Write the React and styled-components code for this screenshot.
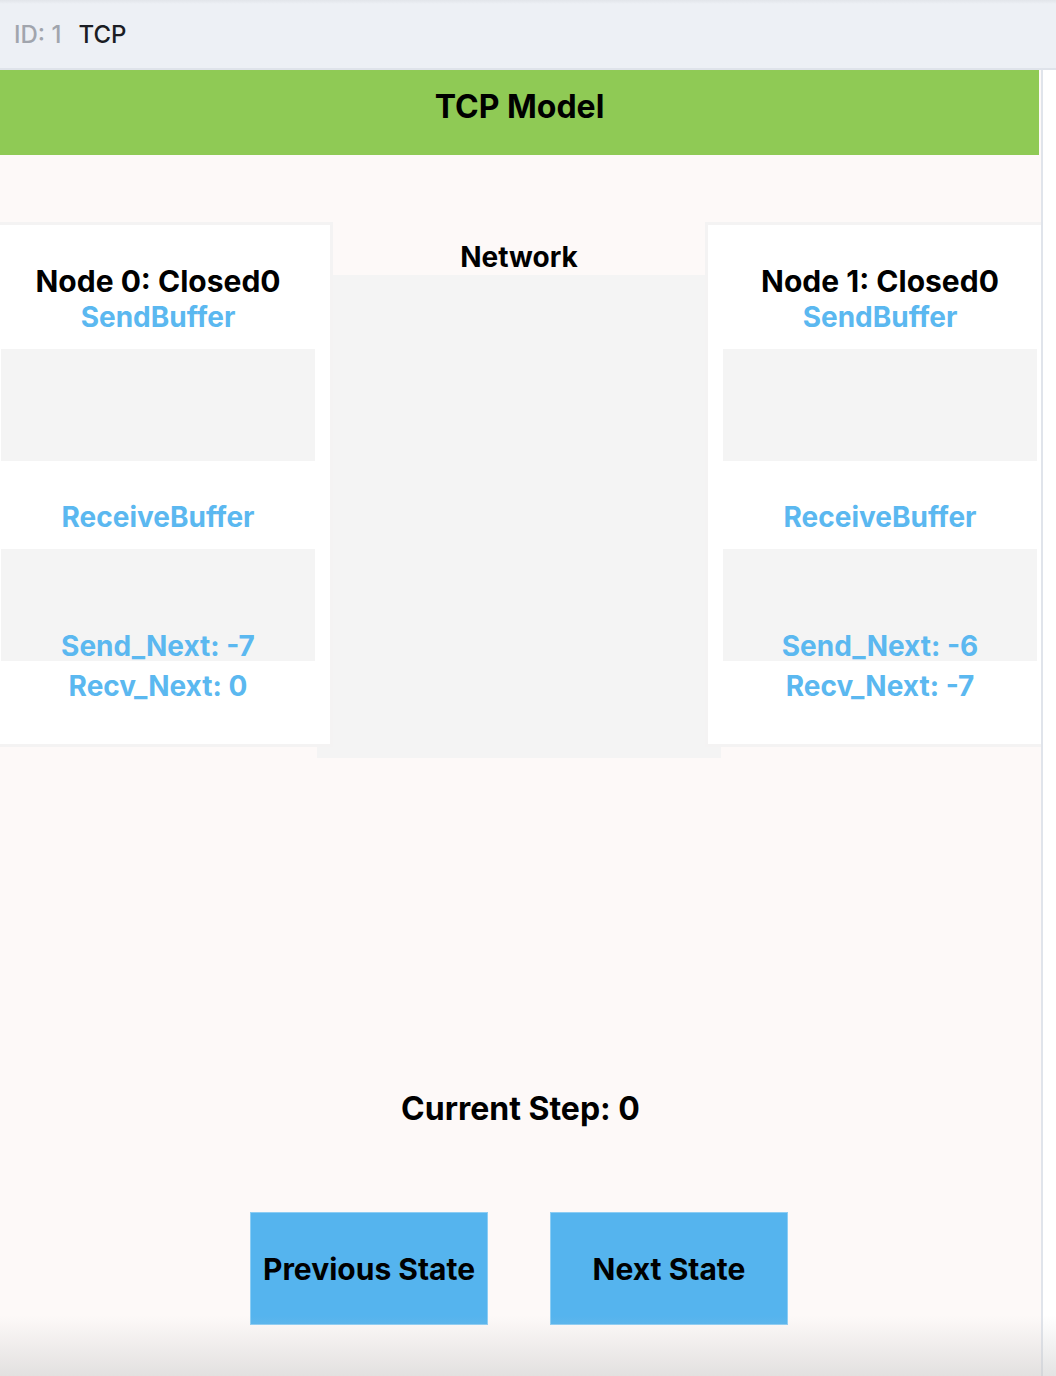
import React from 'react';
import styled, { createGlobalStyle } from 'styled-components';

const GlobalStyle = createGlobalStyle`
  html, body {
    margin: 0;
    padding: 0;
    background: #ffffff;
    font-family: Inter, "Noto Sans", sans-serif;
  }
`;

const Page = styled.div`
  width: 1056px;
  height: 1376px;
  display: flex;
  flex-direction: column;
  overflow: hidden;
  position: relative;
`;

const TopBar = styled.div`
  height: 68px;
  flex-shrink: 0;
  display: flex;
  align-items: center;
  gap: 17px;
  padding-left: 14px;
  background: linear-gradient(#e2e5ea 0, #edf0f5 4px);
  border-bottom: 2px solid #dfe3ea;
  font-size: 24px;
  font-weight: 500;
`;

const IdLabel = styled.span`
  color: #a1a5ad;
`;

const TopTitle = styled.span`
  color: #1b1d24;
`;

const Body = styled.div`
  flex: 1;
  display: flex;
`;

const Panel = styled.div`
  width: 1041px;
  flex-shrink: 0;
  background: #fdf9f8;
  overflow: hidden;
  display: flex;
  flex-direction: column;
  align-items: center;
`;

const Side = styled.div`
  flex: 1;
  background: #ffffff;
  border-left: 2px solid #e0e4eb;
`;

const Banner = styled.div`
  align-self: stretch;
  margin-right: 2px;
  height: 85px;
  box-sizing: border-box;
  padding-top: 17px;
  background: #8fca55;
  text-align: center;
  font-size: 32px;
  font-weight: 700;
  line-height: 40px;
  color: #000;
`;

const Row = styled.div`
  align-self: flex-start;
  margin-top: 67px;
  margin-left: -17px;
  display: flex;
  align-items: flex-start;
`;

const NodeCard = styled.div`
  position: relative;
  z-index: 1;
  width: 344px;
  flex-shrink: 0;
  margin-left: ${({ overlap }) => (overlap ? '-16px' : '0')};
  padding: 38px 0;
  background: #ffffff;
  border: 3px solid #f4f3f3;
  display: flex;
  flex-direction: column;
  align-items: stretch;
  text-align: center;
`;

const NodeTitle = styled.div`
  font-size: 30px;
  font-weight: 700;
  line-height: 36px;
  color: #000;
`;

const BufferLabel = styled.div`
  font-size: 28px;
  font-weight: 700;
  line-height: 36px;
  color: #5bb8f0;
  margin-top: ${({ gap }) => gap || 0}px;
`;

const BufferBox = styled.div`
  height: 112px;
  margin: 14px 15px 0;
  background: #f4f4f4;
`;

const Counter = styled.div`
  font-size: 28px;
  font-weight: 700;
  line-height: 40px;
  color: #5bb8f0;
  margin-top: ${({ lift }) => (lift ? '-35px' : '0')};
`;

const Network = styled.div`
  width: 404px;
  flex-shrink: 0;
  margin-left: -16px;
  height: 536px;
  display: flex;
  flex-direction: column;
`;

const NetworkTitle = styled.div`
  height: 53px;
  display: flex;
  align-items: flex-end;
  justify-content: center;
  padding-bottom: 1px;
  box-sizing: border-box;
  font-size: 28px;
  font-weight: 700;
  color: #000;
`;

const NetworkArea = styled.div`
  flex: 1;
  background: #f4f4f4;
`;

const Step = styled.div`
  margin-top: 331px;
  font-size: 32px;
  font-weight: 700;
  line-height: 40px;
  color: #000;
`;

const Buttons = styled.div`
  margin-top: 83px;
  margin-right: 3px;
  display: flex;
  gap: 62px;
`;

const StateButton = styled.button`
  width: 238px;
  height: 113px;
  padding: 0;
  background: #55b4ee;
  border: 1px solid #8ccdf4;
  border-radius: 0;
  font-family: Inter, "Noto Sans", sans-serif;
  font-size: 30px;
  font-weight: 700;
  color: #000;
  cursor: pointer;
`;

const Shade = styled.div`
  position: absolute;
  left: 0;
  right: 0;
  bottom: 0;
  height: 60px;
  pointer-events: none;
  background: linear-gradient(rgba(200, 200, 200, 0), rgba(200, 200, 200, 0.5));
`;

const nodes = [
  { id: 0, state: 'Closed0', sendNext: -7, recvNext: 0 },
  { id: 1, state: 'Closed0', sendNext: -6, recvNext: -7 },
];

function Node({ node, overlap }) {
  return (
    <NodeCard overlap={overlap}>
      <NodeTitle>Node {node.id}: {node.state}</NodeTitle>
      <BufferLabel>SendBuffer</BufferLabel>
      <BufferBox />
      <BufferLabel gap={38}>ReceiveBuffer</BufferLabel>
      <BufferBox />
      <Counter lift>Send_Next: {node.sendNext}</Counter>
      <Counter>Recv_Next: {node.recvNext}</Counter>
    </NodeCard>
  );
}

export default function App() {
  return (
    <Page>
      <GlobalStyle />
      <TopBar>
        <IdLabel>ID: 1</IdLabel>
        <TopTitle>TCP</TopTitle>
      </TopBar>
      <Body>
        <Panel>
          <Banner>TCP Model</Banner>
          <Row>
            <Node node={nodes[0]} />
            <Network>
              <NetworkTitle>Network</NetworkTitle>
              <NetworkArea />
            </Network>
            <Node node={nodes[1]} overlap />
          </Row>
          <Step>Current Step: 0</Step>
          <Buttons>
            <StateButton>Previous State</StateButton>
            <StateButton>Next State</StateButton>
          </Buttons>
        </Panel>
        <Side />
      </Body>
      <Shade />
    </Page>
  );
}
